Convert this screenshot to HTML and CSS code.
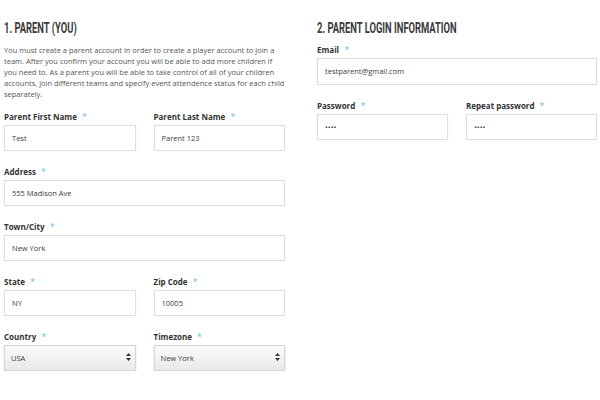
FILE: index.html
```html
<!DOCTYPE html>
<html lang="en">
<head>
  <meta charset="UTF-8" />
  <meta name="viewport" content="width=device-width, initial-scale=1.0" />
  <title>Parent Registration</title>
  <link rel="stylesheet" href="styles.css">
</head>
<body>
  <form class="signup">
    <section class="column">
      <h2 class="heading"><span>1. Parent (You)</span></h2>
      <p class="intro">You must create a parent account in order to create a player account to join a team. After you confirm your account you will be able to add more children if you need to. As a parent you will be able to take control of all of your children accounts, join different teams and specify event attendence status for each child separately.</p>

      <div class="fields">
        <div class="row">
          <div class="field">
            <label>Parent First Name <span class="req">*</span></label>
            <input type="text" value="Test">
          </div>
          <div class="field">
            <label>Parent Last Name <span class="req">*</span></label>
            <input type="text" value="Parent 123">
          </div>
        </div>
        <div class="field">
          <label>Address <span class="req">*</span></label>
          <input type="text" value="555 Madison Ave">
        </div>
        <div class="field">
          <label>Town/City <span class="req">*</span></label>
          <input type="text" value="New York">
        </div>
        <div class="row">
          <div class="field">
            <label>State <span class="req">*</span></label>
            <input type="text" value="NY">
          </div>
          <div class="field">
            <label>Zip Code <span class="req">*</span></label>
            <input type="text" value="10005">
          </div>
        </div>
        <div class="row">
          <div class="field">
            <label>Country <span class="req">*</span></label>
            <div class="select">
              <select><option>USA</option></select>
              <svg class="arrows" width="5" height="8" viewBox="0 0 5 8"><path d="M2.5 0L5 3H0z M2.5 8L5 5H0z" fill="#333"/></svg>
            </div>
          </div>
          <div class="field">
            <label>Timezone <span class="req">*</span></label>
            <div class="select">
              <select><option>New York</option></select>
              <svg class="arrows" width="5" height="8" viewBox="0 0 5 8"><path d="M2.5 0L5 3H0z M2.5 8L5 5H0z" fill="#333"/></svg>
            </div>
          </div>
        </div>
      </div>
    </section>

    <section class="column">
      <h2 class="heading"><span>2. Parent Login Information</span></h2>
      <div class="fields">
        <div class="field">
          <label>Email <span class="req">*</span></label>
          <input type="text" value="testparent@gmail.com" class="tall">
        </div>
        <div class="row">
          <div class="field">
            <label>Password <span class="req">*</span></label>
            <input type="password" value="test">
          </div>
          <div class="field">
            <label>Repeat password <span class="req">*</span></label>
            <input type="password" value="test">
          </div>
        </div>
      </div>
    </section>
  </form>
</body>
</html>
```

FILE: styles.css
```css
body {
  margin: 0;
  font-family: "Open Sans", sans-serif;
  color: #444;
  background-color: #ffffff;
}
.signup {
  display: grid;
  grid-template-columns: 281px 280px;
  column-gap: 32px;
  padding: 0 3px 0 4px;
}
.heading {
  margin: 19px 0 0;
  height: 25px;
  font-family: Roboto, sans-serif;
  font-size: 14px;
  line-height: 18px;
  font-weight: bold;
  text-transform: uppercase;
  color: #3a3a3a;
  white-space: nowrap;
}
.heading span {
  display: inline-block;
  transform: scaleX(0.67);
  transform-origin: left center;
}
.intro {
  margin: 1px 0 11px;
  font-size: 7.5px;
  line-height: 11px;
  color: #555;
}
.fields {
  display: flex;
  flex-direction: column;
  gap: 15px;
}
.row {
  display: grid;
  grid-template-columns: 1fr 1fr;
  column-gap: 18px;
}
.field label {
  display: block;
  margin-bottom: 2px;
  font-size: 8px;
  line-height: 11px;
  font-weight: bold;
  color: #333;
}
.req {
  margin-left: 3px;
  font-size: 9px;
  font-weight: normal;
  color: #6cc0e5;
}
.field input,
.field select {
  box-sizing: border-box;
  width: 100%;
  height: 26px;
  padding: 0 7px;
  border: 1px solid #dedede;
  border-radius: 0;
  box-shadow: 0 0 2px rgba(0, 0, 0, 0.06);
  font-family: "Open Sans", sans-serif;
  font-size: 7.5px;
  color: #3c3c3c;
  background-color: #fff;
  outline: none;
}
.field input.tall {
  height: 27px;
}
.select {
  position: relative;
}
.field select {
  appearance: none;
  -webkit-appearance: none;
  padding-left: 6px;
  border-color: #d6d6d6;
  background: linear-gradient(#fbfbfb, #e9e9e9);
  box-shadow: 0 1px 2px rgba(0, 0, 0, 0.15);
}
.arrows {
  position: absolute;
  right: 5px;
  top: 9px;
}
```
